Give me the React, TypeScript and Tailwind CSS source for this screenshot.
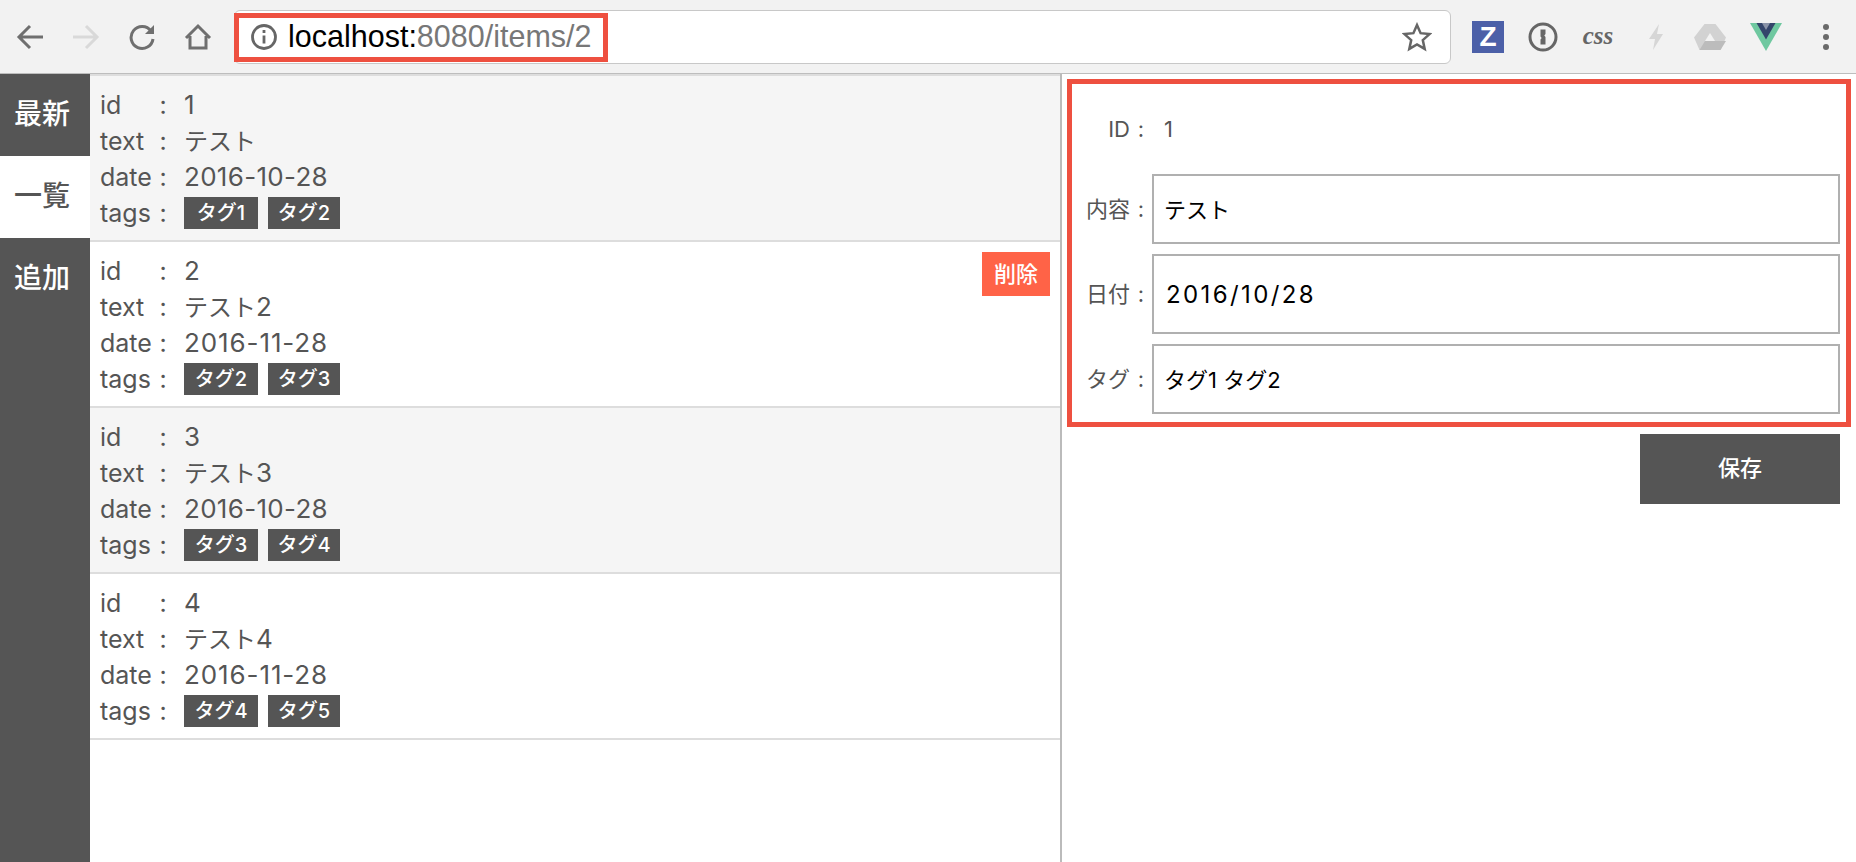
import React from "react";

const items = [
  { id: "1", text: "テスト", num: "", date: "2016-10-28", tags: ["タグ1", "タグ2"], shade: true, del: false },
  { id: "2", text: "テスト", num: "2", date: "2016-11-28", tags: ["タグ2", "タグ3"], shade: false, del: true },
  { id: "3", text: "テスト", num: "3", date: "2016-10-28", tags: ["タグ3", "タグ4"], shade: true, del: false },
  { id: "4", text: "テスト", num: "4", date: "2016-11-28", tags: ["タグ4", "タグ5"], shade: false, del: false },
];

function Row({ label, children }: { label: string; children: React.ReactNode }) {
  return (
    <div className="flex h-9 items-center">
      <span className="w-[53px] text-[25px]">{label}</span>
      <span className="w-[20px] text-center text-[25px]">:</span>
      <div className="ml-[11px]">{children}</div>
    </div>
  );
}

function Item({ it }: { it: (typeof items)[number] }) {
  return (
    <div className={`relative h-[166px] border-b-2 border-[#dddddd] pl-[10px] pt-[11px] ${it.shade ? "bg-[#f5f5f5]" : "bg-white"}`}>
      <Row label="id"><span className="text-[26px]">{it.id}</span></Row>
      <Row label="text"><span>{it.text}<span className="text-[26px]">{it.num}</span></span></Row>
      <Row label="date"><span className={`text-[26px] ${it.date === "2016-11-28" ? "tracking-[0.9px]" : "tracking-[0.3px]"}`}>{it.date}</span></Row>
      <Row label="tags">
        <div className="flex gap-[10px]">
          <span className="flex h-8 w-[74px] items-center justify-center bg-[#555555] text-[20px] font-medium text-white">{it.tags[0]}</span>
          <span className="flex h-8 w-[72px] items-center justify-center bg-[#555555] text-[20px] font-medium text-white">{it.tags[1]}</span>
        </div>
      </Row>
      {it.del && (
        <button className="absolute right-[10px] top-[10px] h-[44px] w-[68px] bg-[#ff6347] text-[22px] font-medium text-white">削除</button>
      )}
    </div>
  );
}

function Label({ text }: { text: string }) {
  return (
    <>
      <span className="w-[58px] shrink-0 text-right text-[22px] text-[#555555]">{text}</span>
      <span className="w-[22px] shrink-0 text-center text-[22px] text-[#555555]">:</span>
    </>
  );
}

function Field({ label, value, h, wide }: { label: string; value: string; h: string; wide?: boolean }) {
  return (
    <div className="flex items-center">
      <Label text={label} />
      <input
        readOnly
        value={value}
        className={`w-full border-2 border-[#b0b0b0] bg-white text-black outline-none ${h} ${wide ? "pl-[12px] text-[24px] tracking-[2.4px]" : "pb-[2px] pl-[10px] text-[22px]"}`}
      />
    </div>
  );
}

export default function App() {
  return (
    <div className="flex h-[862px] w-[1856px] flex-col overflow-hidden bg-white font-['Inter','Noto_Sans_CJK_JP',sans-serif] text-[24px] text-[#555555]">
      {/* browser chrome */}
      <div className="flex h-[74px] shrink-0 items-center border-b border-[#bdbdbd] bg-[#f2f2f2]">
        <div className="flex w-[234px] shrink-0 items-center">
          <svg className="ml-[16px]" width="28" height="28" viewBox="0 0 28 28" fill="none" stroke="#6f6f6f" strokeWidth="3"><path d="M27 14H3M14 3 3 14l11 11" /></svg>
          <svg className="ml-[28px]" width="28" height="28" viewBox="0 0 28 28" fill="none" stroke="#d9d9d9" strokeWidth="3"><path d="M1 14h24M14 3l11 11-11 11" /></svg>
          <svg className="ml-[28px]" width="28" height="28" viewBox="0 0 28 28" fill="none" stroke="#6f6f6f" strokeWidth="3"><path d="M23 8A11 11 0 1 0 25 16" /><path d="M26 2v9h-9z" fill="#6f6f6f" stroke="none" /></svg>
          <svg className="ml-[28px]" width="28" height="28" viewBox="0 0 28 28" fill="none" stroke="#6f6f6f" strokeWidth="3"><path d="M2 15 14 3l12 12M6 13v12h16V13" /></svg>
        </div>
        <div className="relative flex h-[54px] w-[1217px] shrink-0 items-center rounded-[6px] border border-[#c8c8c8] bg-white pl-[15px] pr-[18px] font-['Liberation_Sans',sans-serif] text-[30.5px]">
          <svg width="28" height="28" viewBox="0 0 28 28" fill="none" stroke="#666666" strokeWidth="2.8"><circle cx="14" cy="14" r="11.500" /><path d="M14 12.500v8M14 7v3" /></svg>
          <span className="ml-[10px] text-black">localhost:<span className="text-[#777777]">8080/items/2</span></span>
          <svg className="ml-auto" width="30" height="30" viewBox="0 0 30 30" fill="none" stroke="#666666" strokeWidth="2.5"><path d="m15 3 3.600 8.200 8.900.9-6.700 6 1.900 8.800L15 22.400l-7.700 4.500 1.900-8.800-6.700-6 8.900-.9z" /></svg>
          <div className="absolute left-[-1px] top-[2px] h-[49px] w-[374px] border-[5px] border-[#ee5040]" />
        </div>
        <div className="flex flex-1 items-center pl-[21px]">
          <span className="flex h-8 w-8 items-center justify-center bg-[#4c60a8] font-['Liberation_Sans',sans-serif] text-[28px] font-bold leading-none text-white">Z</span>
          <svg className="ml-[24px]" width="30" height="30" viewBox="0 0 30 30" fill="none"><circle cx="15" cy="15" r="13" stroke="#666666" strokeWidth="3" /><path d="M12.500 7.500h5v4.500l-1.200 1.500 1.200 1.500v7.500h-5v-5l1.200-1.500-1.200-1.500z" fill="#666666" /></svg>
          <span className="ml-[24px] w-[32px] pb-[2px] text-center font-['Liberation_Serif',serif] text-[25px] font-bold italic leading-none text-[#666666]">css</span>
          <svg className="ml-[34px]" width="16" height="28" viewBox="0 0 16 28" fill="#d6d6d6"><path d="M11 1 1 16h6l-2 11 10-16H9z" /></svg>
          <svg className="ml-[30px]" width="32" height="28" viewBox="0 0 32 28"><path d="M10.500 1h11L32 14.500 26.500 27h-21L0 14.500z" fill="#d2d2d2" /><path d="M16 10l-5 8h10z" fill="#f2f2f2" /><path d="M5.500 27l5.500-9h21l-5.500 9z" fill="#bcbcbc" /></svg>
          <svg className="ml-[24px]" width="32" height="28" viewBox="0 0 32 28"><path d="M0 0h32L16 28z" fill="#6fc8a0" /><path d="M6.500 0h19L16 16.500z" fill="#34456b" /><path d="M12 0h8l-4 7z" fill="#8a93a8" /></svg>
          <svg className="ml-[40px]" width="8" height="28" viewBox="0 0 8 28" fill="#6a6a6a"><circle cx="4" cy="4" r="3" /><circle cx="4" cy="14" r="3" /><circle cx="4" cy="24" r="3" /></svg>
        </div>
      </div>

      <div className="flex min-h-0 flex-1">
        {/* side nav */}
        <nav className="flex w-[90px] shrink-0 flex-col bg-[#555555] text-[28px] font-medium">
          <div className="flex h-[82px] items-center justify-center pb-[3px] pr-[6px] text-white">最新</div>
          <div className="flex h-[82px] items-center justify-center bg-white pb-[2px] pr-[6px] text-[#555555]">一覧</div>
          <div className="flex h-[82px] items-center justify-center pb-[3px] pr-[6px] text-white">追加</div>
        </nav>

        {/* list */}
        <div className="w-[970px] shrink-0 border-t-2 border-[#dddddd] leading-none">
          {items.map((it) => <Item key={it.id} it={it} />)}
        </div>

        {/* form */}
        <div className="flex-1 border-l-2 border-[#bbbbbb] pl-[5px] pr-[5px] pt-[5px]">
          <div className="flex flex-col gap-[10px] border-[5px] border-[#ee5040] pb-[8px] pr-[6px]">
            <div className="flex h-[80px] items-center pt-[11px]">
              <Label text="ID" />
              <span className="pl-[12px] text-[22px]">1</span>
            </div>
            <Field label="内容" value="テスト" h="h-[70px]" />
            <Field label="日付" value="2016/10/28" h="h-[80px]" wide />
            <Field label="タグ" value="タグ1 タグ2" h="h-[70px]" />
          </div>
          <div className="mt-[7px] flex justify-end pr-[11px]">
            <button className="h-[70px] w-[200px] bg-[#555555] pb-[1px] text-[22px] font-medium text-white">保存</button>
          </div>
        </div>
      </div>
    </div>
  );
}
